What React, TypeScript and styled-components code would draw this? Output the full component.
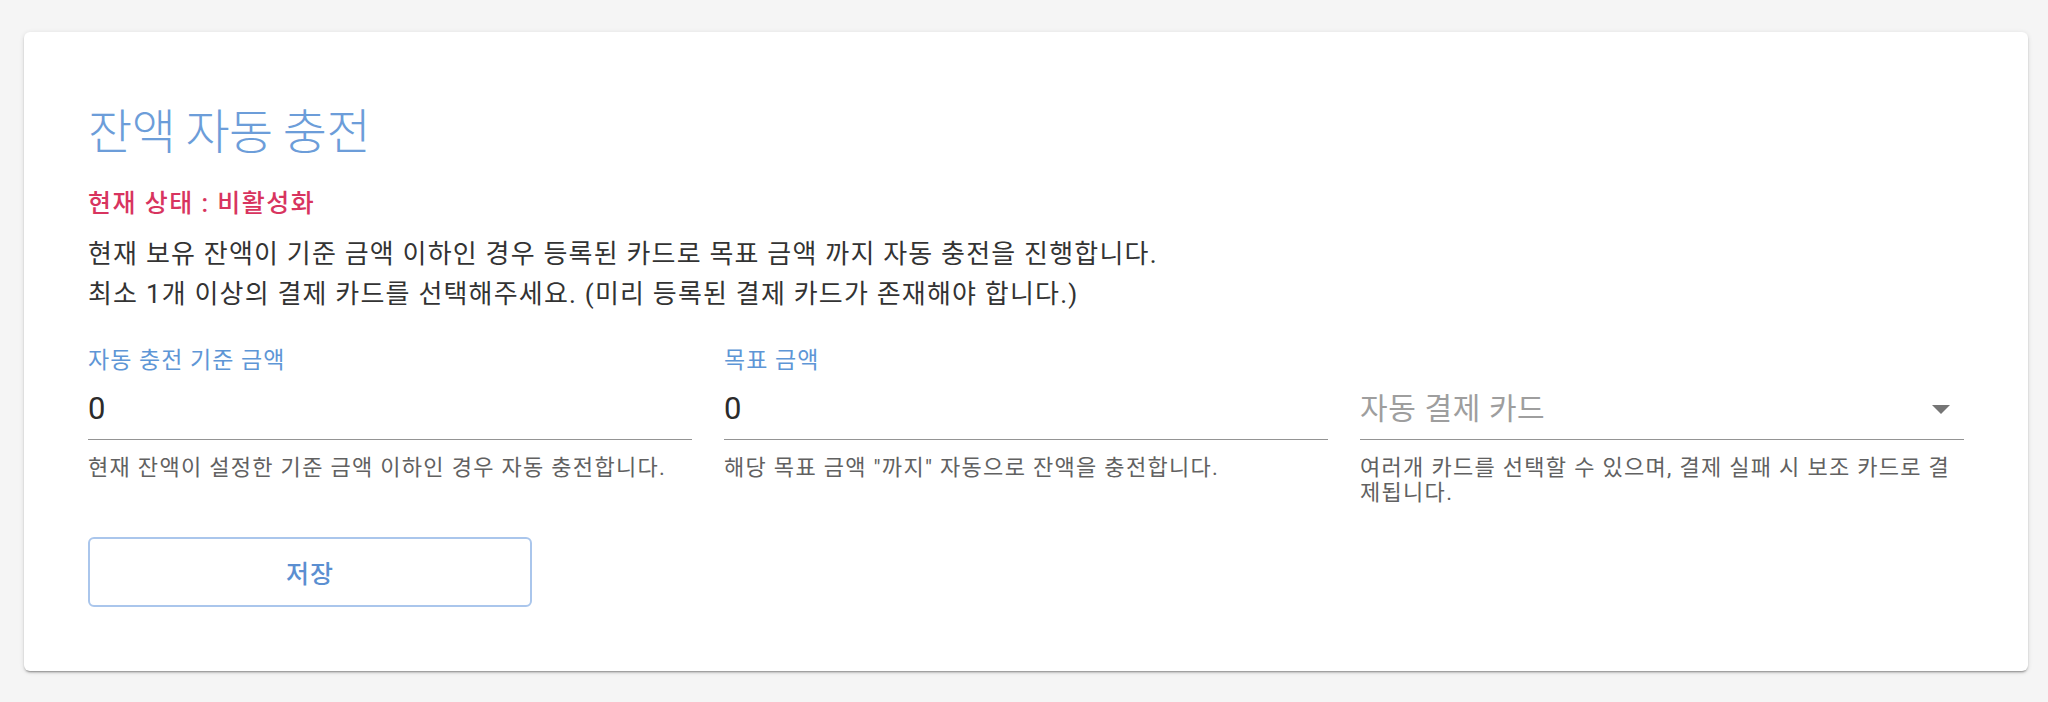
import styled, { createGlobalStyle } from "styled-components";

const GlobalStyle = createGlobalStyle`
  body {
    margin: 0;
    background: #f5f5f5;
    font-family: Roboto, "Noto Sans CJK KR", sans-serif;
  }
`;

function AutoCharge() {
  return (
    <Page>
      <GlobalStyle />
      <Card>
        <Title>잔액 자동 충전</Title>
        <Status>현재 상태 : 비활성화</Status>
        <Description>
          현재 보유 잔액이 기준 금액 이하인 경우 등록된 카드로 목표 금액 까지 자동 충전을 진행합니다.
          <br />
          최소 1개 이상의 결제 카드를 선택해주세요. (미리 등록된 결제 카드가 존재해야 합니다.)
        </Description>

        <Fields>
          <Field>
            <Label>자동 충전 기준 금액</Label>
            <InputRow>
              <Input defaultValue="0" />
            </InputRow>
            <Hint>현재 잔액이 설정한 기준 금액 이하인 경우 자동 충전합니다.</Hint>
          </Field>

          <Field>
            <Label>목표 금액</Label>
            <InputRow>
              <Input defaultValue="0" />
            </InputRow>
            <Hint>해당 목표 금액 "까지" 자동으로 잔액을 충전합니다.</Hint>
          </Field>

          <Field>
            <Label />
            <InputRow>
              <Placeholder>자동 결제 카드</Placeholder>
              <Arrow width="18" height="9" viewBox="0 0 18 9">
                <polygon points="0,0 18,0 9,9" />
              </Arrow>
            </InputRow>
            <Hint>여러개 카드를 선택할 수 있으며, 결제 실패 시 보조 카드로 결제됩니다.</Hint>
          </Field>
        </Fields>

        <SaveButton>저장</SaveButton>
      </Card>
    </Page>
  );
}

const Page = styled.div`
  padding: 32px 20px 32px 24px;
`;

const Card = styled.div`
  background: #fff;
  border-radius: 6px;
  padding: 66px 64px 64px;
  box-shadow: 0 3px 1px -2px rgba(0, 0, 0, 0.2), 0 2px 2px 0 rgba(0, 0, 0, 0.14),
    0 1px 5px 0 rgba(0, 0, 0, 0.12);
`;

const Title = styled.h2`
  margin: 0;
  font-family: "Noto Sans CJK KR Light", "Noto Sans CJK KR DemiLight", Roboto,
    "Noto Sans CJK KR", sans-serif;
  font-size: 48px;
  line-height: 60px;
  font-weight: 300;
  letter-spacing: -0.5px;
  color: #6c9dd9;
`;

const Status = styled.div`
  margin-top: 30px;
  font-size: 25px;
  line-height: 32px;
  font-weight: 500;
  letter-spacing: 1.5px;
  color: #d8345f;
`;

const Description = styled.p`
  margin: 14px 0 0;
  font-size: 26px;
  line-height: 40px;
  letter-spacing: 1.2px;
  color: #333;
`;

const Fields = styled.div`
  margin-top: 33px;
  display: grid;
  grid-template-columns: repeat(3, 1fr);
  column-gap: 32px;
`;

const Field = styled.div`
  display: flex;
  flex-direction: column;
`;

const Label = styled.div`
  height: 28px;
  font-size: 23px;
  line-height: 28px;
  letter-spacing: 1px;
  color: #5e96d6;
`;

const InputRow = styled.div`
  margin-top: 14px;
  height: 51px;
  box-sizing: border-box;
  display: flex;
  align-items: flex-start;
  border-bottom: 1px solid #949494;
`;

const Input = styled.input`
  width: 100%;
  height: 40px;
  padding: 0;
  border: none;
  outline: none;
  background: transparent;
  font-family: inherit;
  font-size: 31px;
  line-height: 40px;
  color: #2b2b2b;
`;

const Placeholder = styled.span`
  flex: 1;
  font-size: 30px;
  line-height: 40px;
  letter-spacing: 0.6px;
  color: #9e9e9e;
`;

const Arrow = styled.svg`
  margin: 16px 14px 0 0;
  fill: #757575;
`;

const Hint = styled.div`
  margin-top: 15px;
  font-size: 22px;
  line-height: 25px;
  letter-spacing: 1.3px;
  color: #616161;
`;

const SaveButton = styled.button`
  display: block;
  margin-top: 32px;
  width: 444px;
  height: 70px;
  border: 2px solid #aac6ec;
  border-radius: 6px;
  background: #fff;
  font-family: inherit;
  font-size: 25px;
  font-weight: 500;
  letter-spacing: 1px;
  color: #5b8fd1;
  cursor: pointer;
`;

export default AutoCharge;
